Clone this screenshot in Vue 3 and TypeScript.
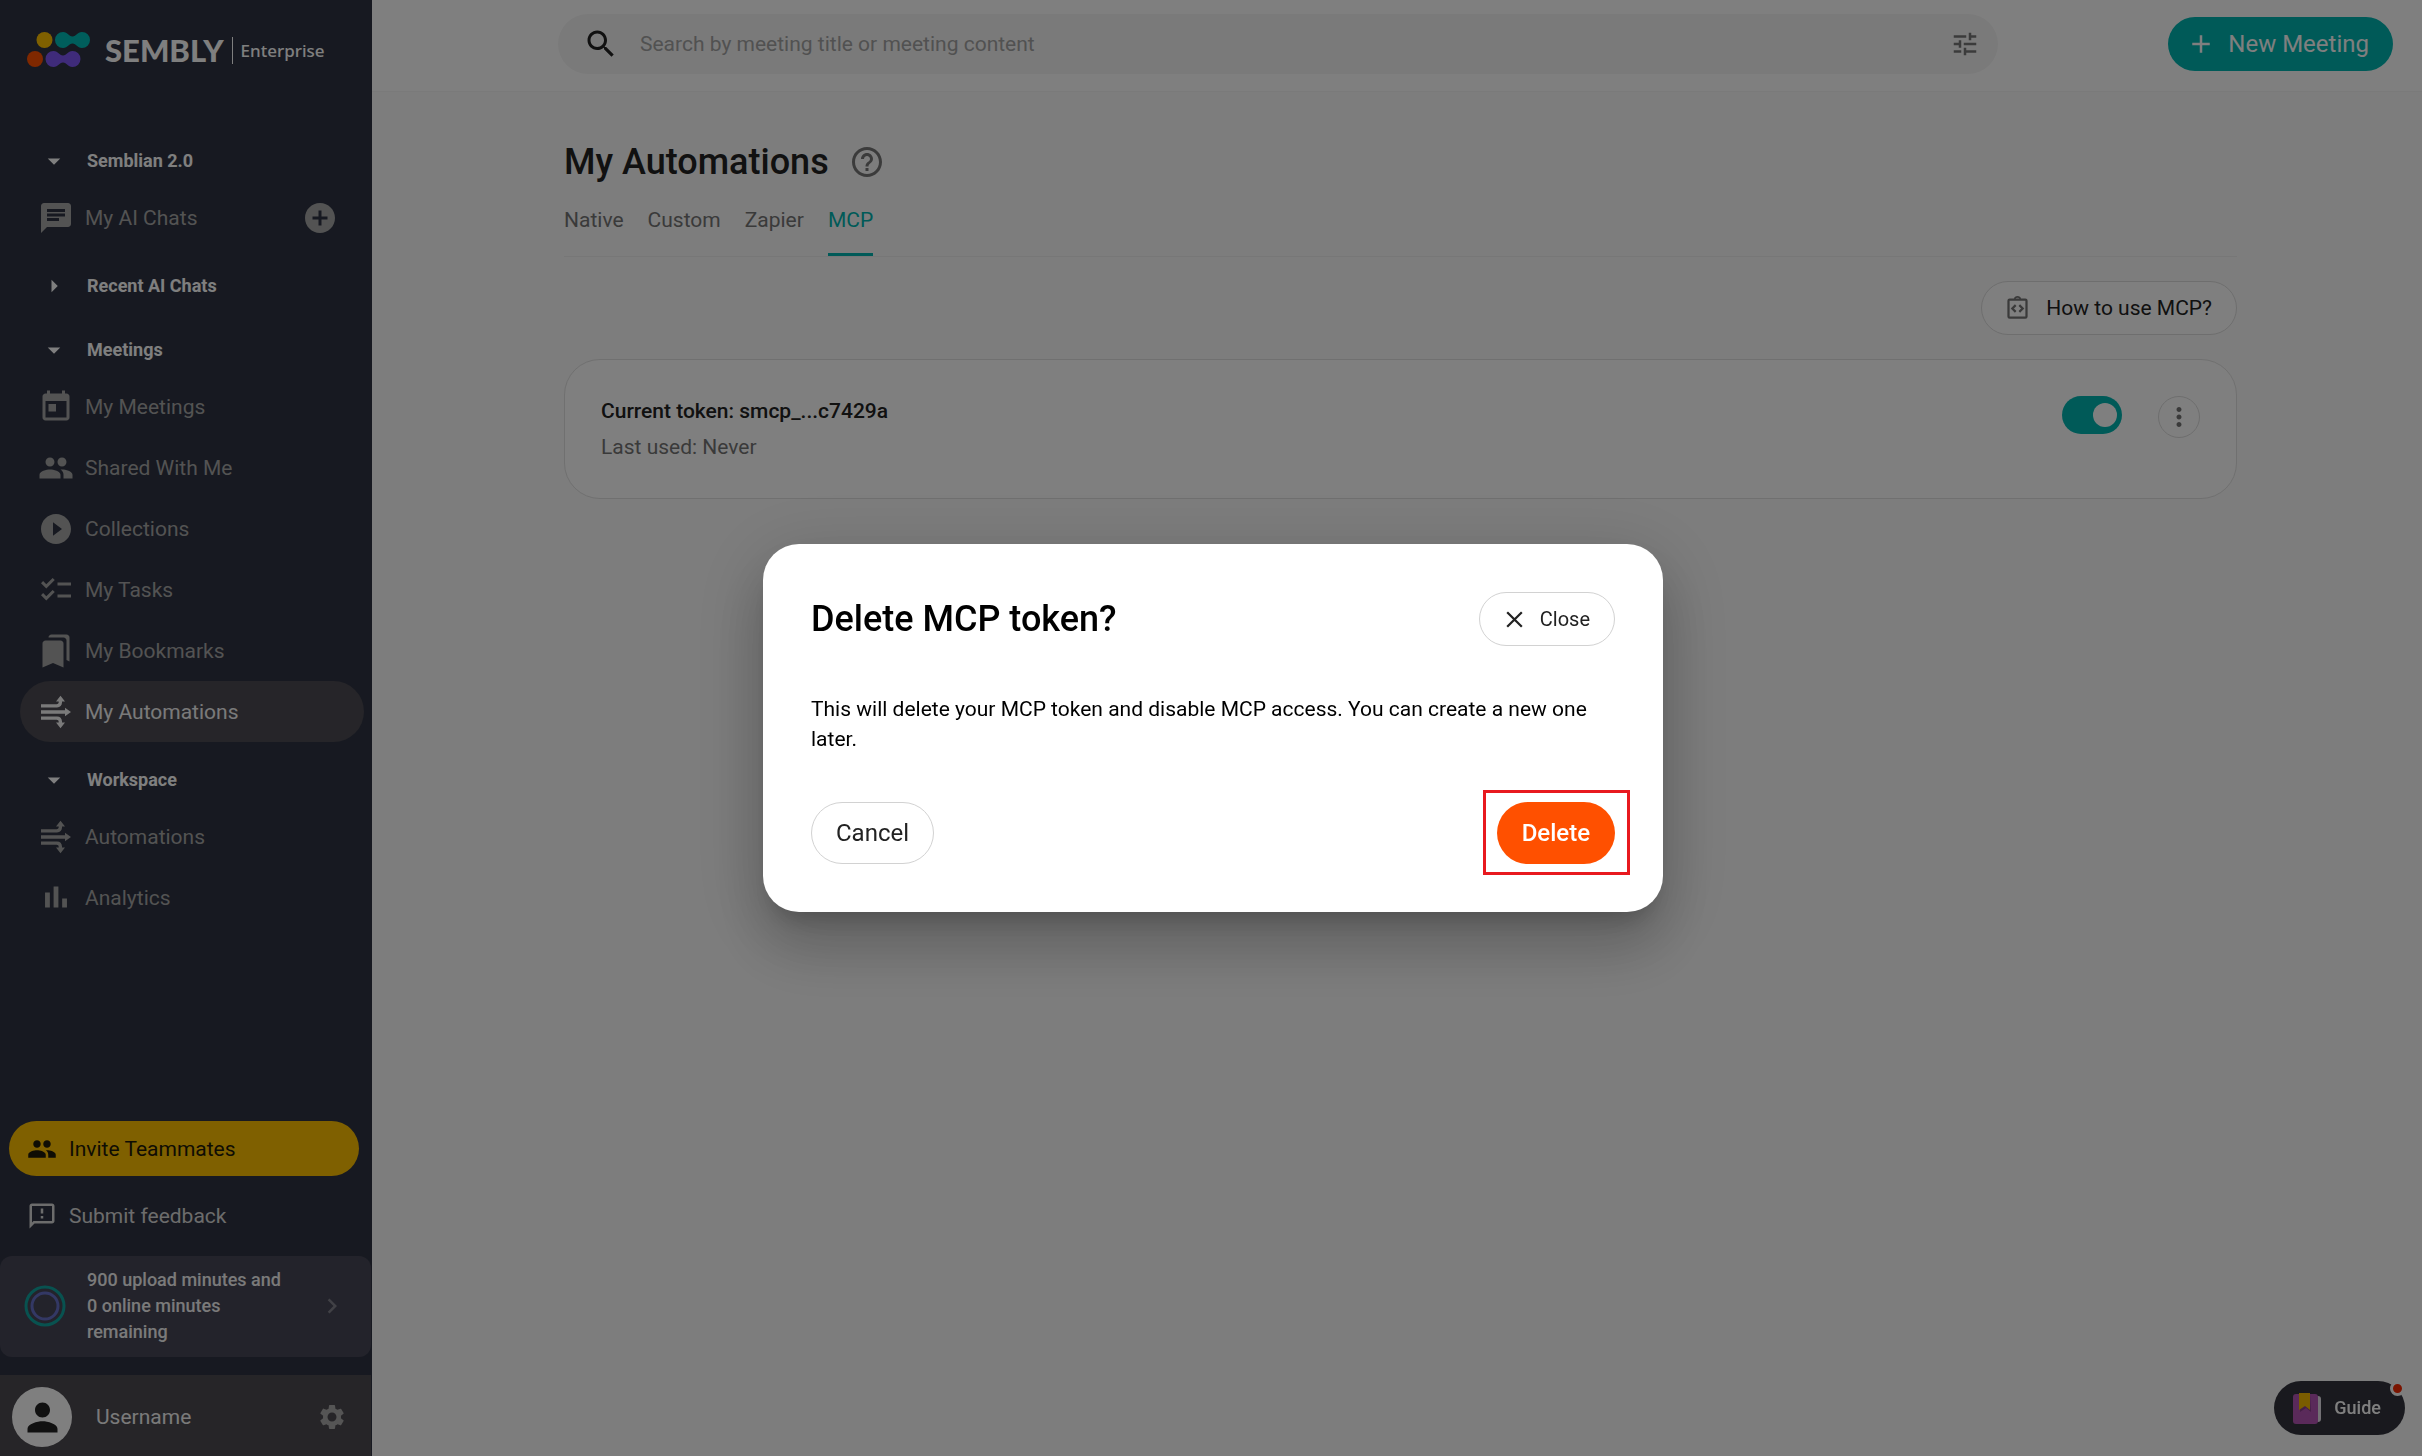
<script setup lang="ts">
import { ref } from 'vue'

interface NavItem {
  label: string
  icon: string
  active?: boolean
  addable?: boolean
}

interface NavSection {
  title: string
  open: boolean
  items: NavItem[]
}

const icons: Record<string, string> = {
  chat: 'M20 2H4c-1.1 0-1.99.9-1.99 2L2 22l4-4h14c1.1 0 2-.9 2-2V4c0-1.1-.9-2-2-2zM6 9h12v2H6V9zm8 5H6v-2h8v2zm4-6H6V6h12v2z',
  today: 'M19 3h-1V1h-2v2H8V1H6v2H5c-1.11 0-1.99.9-1.99 2L3 19c0 1.1.89 2 2 2h14c1.1 0 2-.9 2-2V5c0-1.1-.9-2-2-2zm0 16H5V8h14v11zM7 10h5v5H7z',
  people: 'M16 11c1.66 0 2.99-1.34 2.99-3S17.66 5 16 5s-3 1.34-3 3 1.34 3 3 3zm-8 0c1.66 0 2.99-1.34 2.99-3S9.66 5 8 5 5 6.34 5 8s1.34 3 3 3zm0 2c-2.33 0-7 1.17-7 3.5V19h14v-2.5c0-2.33-4.67-3.5-7-3.5zm8 0c-.29 0-.62.02-.97.05 1.16.84 1.97 1.97 1.97 3.45V19h6v-2.5c0-2.33-4.67-3.5-7-3.5z',
  play: 'M12 2C6.48 2 2 6.48 2 12s4.48 10 10 10 10-4.48 10-10S17.52 2 12 2zm-2 14.5v-9l6 4.5-6 4.5z',
  tasks: 'M22 7h-9v2h9V7zm0 8h-9v2h9v-2zM5.54 11L2 7.46l1.41-1.41 2.12 2.12 4.24-4.24 1.41 1.41L5.54 11zm0 8L2 15.46l1.41-1.41 2.12 2.12 4.24-4.24 1.41 1.41L5.54 19z',
  bookmarks: 'M19 18l2 1V3c0-1.1-.9-2-2-2H8.99C7.89 1 7 1.9 7 3h10c1.1 0 2 .9 2 2v13zM15 5H5c-1.1 0-2 .9-2 2v16l7-3 7 3V7c0-1.1-.9-2-2-2z',
  automation: 'M2 6.800h10.400c.9 0 1.400-.5 1.400-1.400V5H12l3-3.800L18 5h-2v.7c0 2-1.300 3.300-3.300 3.300H2zM2 10.900h16V9.200l4 2.800-4 2.800v-1.700H2zM2 15h10.700c2 0 3.300 1.300 3.300 3.300v.7h2l-3 3.800-3-3.800h1.800v-.4c0-.9-.5-1.400-1.400-1.400H2z',
  analytics: 'M4.700 8.400h3.200v10H4.700zM10.400 4.400h3.200v14h-3.200zM16.100 12.400h3.200v6h-3.200z',
  addCircle: 'M12 2C6.48 2 2 6.48 2 12s4.48 10 10 10 10-4.48 10-10S17.52 2 12 2zm5 11h-4v4h-2v-4H7v-2h4V7h2v4h4v2z',
  feedback: 'M20 2H4c-1.100 0-1.990.9-1.990 2L2 22l4-4h14c1.100 0 2-.9 2-2V4c0-1.100-.9-2-2-2zm0 14H5.170L4 17.170V4h16v12zm-9-4h2v2h-2zm0-6h2v4h-2z',
  search: 'M15.500 14h-.79l-.28-.27C15.410 12.590 16 11.110 16 9.500 16 5.910 13.090 3 9.500 3S3 5.910 3 9.500 5.910 16 9.500 16c1.610 0 3.090-.59 4.230-1.570l.27.28v.79l5 4.990L20.490 19l-4.990-5zm-6 0C7.010 14 5 11.990 5 9.500S7.010 5 9.500 5 14 7.010 14 9.500 11.990 14 9.500 14z',
  tune: 'M3 17v2h6v-2H3zM3 5v2h10V5H3zm10 16v-2h8v-2h-8v-2h-2v6h2zM7 9v2H3v2h4v2h2V9H7zm14 4v-2H11v2h10zm-6-4h2V7h4V5h-4V3h-2v6z',
  help: 'M11 18h2v-2h-2v2zm1-16C6.480 2 2 6.480 2 12s4.480 10 10 10 10-4.480 10-10S17.520 2 12 2zm0 18c-4.410 0-8-3.590-8-8s3.590-8 8-8 8 3.590 8 8-3.590 8-8 8zm0-14c-2.210 0-4 1.790-4 4h2c0-1.100.9-2 2-2s2 .9 2 2c0 2-3 1.750-3 5h2c0-2.250 3-2.500 3-5 0-2.210-1.790-4-4-4z',
  more: 'M12 8c1.100 0 2-.9 2-2s-.9-2-2-2-2 .9-2 2 .9 2 2 2zm0 2c-1.100 0-2 .9-2 2s.9 2 2 2 2-.9 2-2-.9-2-2-2zm0 6c-1.100 0-2 .9-2 2s.9 2 2 2 2-.9 2-2-.9-2-2-2z',
  chevron: 'M10 6L8.590 7.410 13.170 12l-4.580 4.590L10 18l6-6z',
  person: 'M12 12c2.210 0 4-1.790 4-4s-1.790-4-4-4-4 1.790-4 4 1.790 4 4 4zm0 2c-2.670 0-8 1.340-8 4v2h16v-2c0-2.660-5.330-4-8-4z',
  settings: 'M19.140 12.940c.04-.3.060-.61.060-.94 0-.32-.02-.64-.07-.94l2.030-1.580c.18-.14.23-.41.120-.61l-1.920-3.320c-.12-.22-.37-.29-.59-.22l-2.390.96c-.5-.38-1.030-.7-1.620-.94l-.36-2.540c-.04-.24-.24-.41-.48-.41h-3.840c-.24 0-.43.17-.47.41l-.36 2.540c-.59.24-1.130.57-1.620.94l-2.390-.96c-.22-.08-.47 0-.59.22L2.740 8.870c-.12.21-.08.47.120.61l2.030 1.580c-.05.3-.09.63-.09.94s.02.64.07.94l-2.030 1.580c-.18.14-.23.41-.12.61l1.920 3.320c.12.22.37.29.59.22l2.390-.96c.5.38 1.030.7 1.620.94l.36 2.540c.05.24.24.41.48.41h3.840c.24 0 .44-.17.47-.41l.36-2.540c.59-.24 1.130-.56 1.620-.94l2.390.96c.22.08.47 0 .59-.22l1.920-3.320c.12-.22.07-.47-.12-.61l-2.010-1.580zM12 15.600c-1.980 0-3.600-1.620-3.600-3.600s1.620-3.600 3.600-3.600 3.600 1.620 3.600 3.600-1.620 3.600-3.600 3.600z',
}

const sections = ref<NavSection[]>([
  { title: 'Semblian 2.0', open: true, items: [{ label: 'My AI Chats', icon: 'chat', addable: true }] },
  { title: 'Recent AI Chats', open: false, items: [] },
  {
    title: 'Meetings',
    open: true,
    items: [
      { label: 'My Meetings', icon: 'today' },
      { label: 'Shared With Me', icon: 'people' },
      { label: 'Collections', icon: 'play' },
      { label: 'My Tasks', icon: 'tasks' },
      { label: 'My Bookmarks', icon: 'bookmarks' },
      { label: 'My Automations', icon: 'automation', active: true },
    ],
  },
  {
    title: 'Workspace',
    open: true,
    items: [
      { label: 'Automations', icon: 'automation' },
      { label: 'Analytics', icon: 'analytics' },
    ],
  },
])

const tabs = ['Native', 'Custom', 'Zapier', 'MCP']
const activeTab = ref('MCP')
const query = ref('')
const tokenEnabled = ref(true)
const dialogOpen = ref(true)
</script>

<template>
  <div class="app">
    <aside class="sidebar">
      <a class="brand" href="#" aria-label="Sembly Enterprise">
        <svg class="brand-mark" viewBox="0 0 64 36" aria-hidden="true">
          <circle cx="17.500" cy="8" r="8" fill="#ffc000" />
          <path fill="#00bdb8" d="M36 0c5 0 5.500 4.500 9.500 4.500S50 0 55 0a8 8 0 0 1 0 16c-5 0-5.500-4.500-9.500-4.500S41 16 36 16a8 8 0 0 1 0-16z" />
          <circle cx="8" cy="27" r="8" fill="#ff5000" />
          <path fill="#7f56f5" d="M26.500 19c5 0 5.500 4.500 9.500 4.500s4.500-4.500 9.500-4.500a8 8 0 0 1 0 16c-5 0-5.500-4.500-9.500-4.500S31.500 35 26.500 35a8 8 0 0 1 0-16z" />
        </svg>
        <span class="brand-name">SEMBLY</span>
        <span class="brand-plan">Enterprise</span>
      </a>

      <nav class="nav" aria-label="Main">
        <section v-for="section in sections" :key="section.title">
          <button class="section-title" type="button" :aria-expanded="section.open" @click="section.open = !section.open">
            <svg class="i30" viewBox="0 0 24 24" aria-hidden="true">
              <path :d="section.open ? 'M7 10l5 5 5-5z' : 'M10 17l5-5-5-5z'" />
            </svg>
            {{ section.title }}
          </button>
          <ul class="items">
            <li v-for="item in section.open ? section.items : []" :key="item.label" class="item" :class="{ active: item.active }">
              <a class="item-link" href="#">
                <svg class="i36" viewBox="0 0 24 24" aria-hidden="true"><path :d="icons[item.icon]" /></svg>
                {{ item.label }}
              </a>
              <button v-if="item.addable" class="icon-button" type="button" aria-label="New chat">
                <svg class="i36" viewBox="0 0 24 24" aria-hidden="true"><path :d="icons.addCircle" /></svg>
              </button>
            </li>
          </ul>
        </section>
      </nav>

      <div class="side-bottom">
        <button class="side-action invite" type="button">
          <svg class="i30" viewBox="0 0 24 24" aria-hidden="true"><path :d="icons.people" /></svg>
          Invite Teammates
        </button>
        <button class="side-action feedback" type="button">
          <svg class="i30" viewBox="0 0 24 24" aria-hidden="true"><path :d="icons.feedback" /></svg>
          Submit feedback
        </button>
        <a class="quota" href="#">
          <svg class="quota-ring" viewBox="0 0 42 42" fill="none" aria-hidden="true">
            <circle cx="21" cy="21" r="19" stroke="#10a5a0" stroke-width="3" />
            <circle cx="21" cy="21" r="13" stroke="#6670c8" stroke-width="3" />
          </svg>
          <span class="quota-text">900 upload minutes and 0 online minutes remaining</span>
          <svg class="i30 quota-arrow" viewBox="0 0 24 24" aria-hidden="true"><path :d="icons.chevron" /></svg>
        </a>
        <div class="user">
          <span class="avatar">
            <svg class="avatar-icon" viewBox="0 0 24 24" aria-hidden="true"><path :d="icons.person" /></svg>
          </span>
          <span class="user-name">Username</span>
          <button class="icon-button" type="button" aria-label="Settings">
            <svg class="i30" viewBox="0 0 24 24" aria-hidden="true"><path :d="icons.settings" /></svg>
          </button>
        </div>
      </div>
    </aside>

    <div class="page">
      <header class="topbar">
        <form class="search" role="search" @submit.prevent>
          <svg class="i36" viewBox="0 0 24 24" aria-hidden="true"><path :d="icons.search" /></svg>
          <input v-model="query" class="search-input" type="text" aria-label="Search meetings" placeholder="Search by meeting title or meeting content" />
          <button class="icon-button filter" type="button" aria-label="Filters">
            <svg class="i30" viewBox="0 0 24 24" aria-hidden="true"><path :d="icons.tune" /></svg>
          </button>
        </form>
        <button class="new-meeting" type="button">
          <svg class="i30" viewBox="0 0 24 24" fill="none" stroke="currentColor" stroke-width="2" aria-hidden="true"><path d="M12 5v14M5 12h14" /></svg>
          New Meeting
        </button>
      </header>

      <main class="content">
        <div class="heading">
          <h1 class="title">My Automations</h1>
          <button class="icon-button help" type="button" aria-label="Help">
            <svg class="i36" viewBox="0 0 24 24" aria-hidden="true"><path :d="icons.help" /></svg>
          </button>
        </div>
        <div class="tabs" role="tablist">
          <button v-for="tab in tabs" :key="tab" class="tab" :class="{ selected: tab === activeTab }" type="button" role="tab" :aria-selected="tab === activeTab" @click="activeTab = tab">{{ tab }}</button>
        </div>

        <button class="howto" type="button">
          <svg class="i27" viewBox="0 0 24 24" fill="none" stroke="currentColor" stroke-width="2" aria-hidden="true">
            <rect x="4" y="4" width="16" height="16" rx="1" />
            <path d="M9.500 3.500a2.600 2.600 0 0 1 5 0" stroke-width="1.600" />
            <path d="M10.400 9l-3 3 3 3M13.600 9l3 3-3 3" />
          </svg>
          How to use MCP?
        </button>

        <section class="card">
          <div class="token">
            <p class="token-name">Current token: smcp_...c7429a</p>
            <p class="token-used">Last used: Never</p>
          </div>
          <input v-model="tokenEnabled" class="switch" type="checkbox" role="switch" aria-label="MCP token enabled" />
          <button class="more" type="button" aria-label="More actions">
            <svg class="i30" viewBox="0 0 24 24" aria-hidden="true"><path :d="icons.more" /></svg>
          </button>
        </section>
      </main>
    </div>

    <button class="guide" type="button">
      <svg class="guide-book" viewBox="0 0 28 31" aria-hidden="true">
        <rect x="18" y="3" width="10" height="26" rx="3" fill="#e4e0e8" />
        <rect x="0" y="1" width="25" height="30" rx="3" fill="#b455b5" />
        <path d="M7 1h10l1 18-5-4-6 4z" fill="#8a3d8c" />
        <path d="M6 0h11v17l-5-4-6 4z" fill="#f5b800" />
      </svg>
      Guide
      <span class="guide-dot"></span>
    </button>

    <div v-if="dialogOpen" class="backdrop">
      <div class="dialog" role="dialog" aria-modal="true" aria-labelledby="dialog-title">
        <header class="dialog-head">
          <h2 id="dialog-title" class="title">Delete MCP token?</h2>
          <button class="close" type="button" @click="dialogOpen = false">
            <svg class="i27" viewBox="0 0 24 24" fill="none" stroke="currentColor" stroke-width="2" aria-hidden="true"><path d="M5.500 5.500l13 13M18.500 5.500l-13 13" /></svg>
            Close
          </button>
        </header>
        <p class="dialog-text">This will delete your MCP token and disable MCP access. You can create a new one later.</p>
        <footer class="dialog-actions">
          <button class="cancel" type="button" @click="dialogOpen = false">Cancel</button>
          <span class="highlight"><button class="delete" type="button">Delete</button></span>
        </footer>
      </div>
    </div>
  </div>
</template>

<style>
body {
  margin: 0;
  background: #fafafa;
}
</style>

<style scoped>
* {
  box-sizing: border-box;
}

.app {
  display: flex;
  min-height: 100vh;
  font-family: Roboto, 'Liberation Sans', sans-serif;
  font-size: 21px;
  line-height: 30px;
  color: #222;
}

button,
input {
  margin: 0;
  padding: 0;
  border: 0;
  background: none;
  font: inherit;
  color: inherit;
}

button {
  cursor: pointer;
  white-space: nowrap;
}

a {
  color: inherit;
  text-decoration: none;
}

p,
h1,
h2,
ul {
  margin: 0;
  padding: 0;
}

svg {
  display: block;
  flex: none;
  fill: currentColor;
}

svg[fill='none'] {
  fill: none;
}

.i27 {
  width: 27px;
  height: 27px;
}

.i30 {
  width: 30px;
  height: 30px;
}

.i36 {
  width: 36px;
  height: 36px;
}

.icon-button {
  display: flex;
}

.title {
  font-size: 36px;
  font-weight: 500;
  line-height: 48px;
}

/* Sidebar */
.sidebar {
  position: sticky;
  top: 0;
  display: flex;
  flex-direction: column;
  flex: none;
  width: 372px;
  height: 100vh;
  background: #2e3342;
  color: #fff;
}

.brand {
  display: flex;
  align-items: center;
  height: 100px;
  padding-left: 27px;
}

.brand-mark {
  width: 64px;
  height: 36px;
}

.brand-name {
  margin-left: 14px;
  font-family: Lato, 'Open Sans', sans-serif;
  font-size: 31px;
  font-weight: 900;
}

.brand-plan {
  margin-left: 8px;
  padding-left: 8px;
  border-left: 1px solid #fff;
  font-family: 'Noto Sans', sans-serif;
  font-size: 17px;
  font-weight: 500;
  line-height: 27px;
}

.nav {
  flex: 1;
  padding-top: 26px;
}

.section-title {
  display: flex;
  align-items: center;
  gap: 18px;
  width: 100%;
  height: 60px;
  padding: 10px 0 0 39px;
  font-size: 18px;
  font-weight: 700;
}

.items {
  padding: 1px 8px 3px 20px;
  list-style: none;
}

.item {
  display: flex;
  align-items: center;
  height: 61px;
  padding: 0 26px 0 18px;
  border-radius: 31px;
  color: #a6a6a6;
}

.item.active {
  background: #4c4a52;
  color: #f5f5f5;
}

.item-link {
  display: flex;
  flex: 1;
  align-items: center;
  gap: 11px;
}

.side-action {
  display: flex;
  align-items: center;
  gap: 12px;
  width: 350px;
  height: 55px;
  margin-left: 9px;
  padding-left: 18px;
  border-radius: 28px;
}

.invite {
  background: #ffc000;
  color: #1e1a08;
}

.feedback {
  margin-top: 12px;
  color: #d8d8d8;
}

.quota {
  display: flex;
  align-items: center;
  height: 101px;
  margin: 13px 1px 18px 0;
  padding: 0 24px 2px;
  border-radius: 12px;
  background: #464656;
  color: #f5f5f5;
  font-size: 18px;
  font-weight: 500;
  line-height: 26px;
}

.quota-ring {
  width: 42px;
  height: 42px;
}

.quota-text {
  width: 206px;
  margin: 0 auto 0 21px;
}

.quota-arrow {
  color: #83838c;
}

.user {
  display: flex;
  align-items: center;
  height: 81px;
  margin-right: 1px;
  padding: 3px 24px 0 12px;
  background: #4c4a50;
  color: #aaa;
}

.avatar {
  display: flex;
  align-items: center;
  justify-content: center;
  width: 60px;
  height: 60px;
  border-radius: 50%;
  background: #fff;
  color: #222;
}

.avatar-icon {
  width: 45px;
  height: 45px;
}

.user-name {
  flex: 1;
  margin-left: 24px;
  color: #f5f5f5;
}

/* Page */
.page {
  flex: 1;
  min-width: 0;
  background: #fafafa;
}

.topbar {
  display: flex;
  align-items: center;
  justify-content: space-between;
  gap: 170px;
  height: 92px;
  padding: 0 29px 4px 186px;
  border-bottom: 1px solid #f5f5f5;
  background: #fff;
}

.search {
  display: flex;
  flex: 1;
  align-items: center;
  height: 60px;
  padding: 0 18px 0 25px;
  border-radius: 30px;
  background: #f5f5f5;
}

.search-input {
  flex: 1;
  min-width: 0;
  margin: 0 21px;
  outline: 0;
}

.search-input::placeholder {
  color: #a3a3a3;
  opacity: 1;
}

.filter,
.help {
  color: #777;
}

.new-meeting {
  display: flex;
  align-items: center;
  gap: 12px;
  height: 54px;
  padding: 0 24px 0 18px;
  border-radius: 27px;
  background: #00b4b0;
  color: #fff;
  font-size: 24px;
}

.content {
  padding: 46px 185px 48px 192px;
}

.heading {
  display: flex;
  align-items: center;
  gap: 20px;
}

.tabs {
  display: flex;
  gap: 24px;
  height: 71px;
  border-bottom: 1px solid #eee;
}

.tab {
  padding: 4px 0 3px;
  border-bottom: 3px solid transparent;
  color: #757575;
}

.tab.selected {
  border-color: #00b4b0;
  color: #00b4b0;
}

.howto {
  display: flex;
  align-items: center;
  gap: 15px;
  height: 54px;
  margin: 24px 0 24px auto;
  padding: 0 24px 0 22px;
  border: 1px solid #dcdcdc;
  border-radius: 27px;
  background: #fff;
}

.howto svg,
.more {
  color: #757575;
}

.card {
  display: flex;
  align-items: flex-start;
  min-height: 140px;
  padding: 36px;
  border: 1px solid #e0e0e0;
  border-radius: 36px;
  background: #fff;
}

.token {
  flex: 1;
}

.token-name {
  font-weight: 500;
}

.token-used {
  margin-top: 6px;
  color: #757575;
}

.switch {
  position: relative;
  width: 60px;
  height: 38px;
  border-radius: 19px;
  background: #00b4b0;
  appearance: none;
  cursor: pointer;
}

.switch:not(:checked) {
  background: #bdbdbd;
}

.switch::after {
  content: '';
  position: absolute;
  top: 7px;
  left: 6px;
  width: 24px;
  height: 24px;
  border-radius: 50%;
  background: #fff;
}

.switch:checked::after {
  left: 31px;
}

.more {
  display: flex;
  align-items: center;
  justify-content: center;
  width: 42px;
  height: 42px;
  margin-left: 36px;
  border: 1px solid #dcdcdc;
  border-radius: 50%;
}

.guide {
  position: fixed;
  right: 17px;
  bottom: 21px;
  display: flex;
  align-items: center;
  gap: 13px;
  height: 54px;
  padding: 0 24px 0 19px;
  border-radius: 27px;
  background: #32333c;
  color: #fff;
  font-size: 18px;
  font-weight: 500;
}

.guide-book {
  width: 28px;
  height: 31px;
}

.guide-dot {
  position: absolute;
  top: 0;
  right: 0;
  width: 15px;
  height: 15px;
  border: 3px solid #fafafa;
  border-radius: 50%;
  background: #f52800;
}

/* Dialog */
.backdrop {
  position: fixed;
  inset: 0;
  display: flex;
  align-items: center;
  justify-content: center;
  padding-left: 4px;
  background: rgba(0, 0, 0, 0.5);
}

.dialog {
  width: 900px;
  padding: 48px;
  border-radius: 36px;
  background: #fff;
  color: #000;
  box-shadow:
    0 17px 23px -11px rgba(0, 0, 0, 0.2),
    0 36px 57px 5px rgba(0, 0, 0, 0.14),
    0 14px 69px 12px rgba(0, 0, 0, 0.12);
}

.dialog-head,
.dialog-actions {
  display: flex;
  align-items: center;
  justify-content: space-between;
}

.close {
  display: flex;
  align-items: center;
  gap: 12px;
  height: 54px;
  padding: 0 24px 0 21px;
  border: 1px solid #d2d2d2;
  border-radius: 27px;
  color: #222;
  font-size: 20px;
}

.dialog-text {
  margin: 48px 0;
}

.cancel,
.delete {
  height: 62px;
  padding: 0 24px;
  border-radius: 31px;
  font-size: 24px;
}

.cancel {
  border: 1px solid #d2d2d2;
  color: #222;
}

.highlight {
  position: relative;
}

.highlight::after {
  content: '';
  position: absolute;
  inset: -12px -15px -11px -14px;
  border: 3px solid #e8191f;
  pointer-events: none;
}

.delete {
  display: block;
  padding: 0 25px;
  background: #ff5000;
  color: #fff;
  font-weight: 500;
}
</style>
